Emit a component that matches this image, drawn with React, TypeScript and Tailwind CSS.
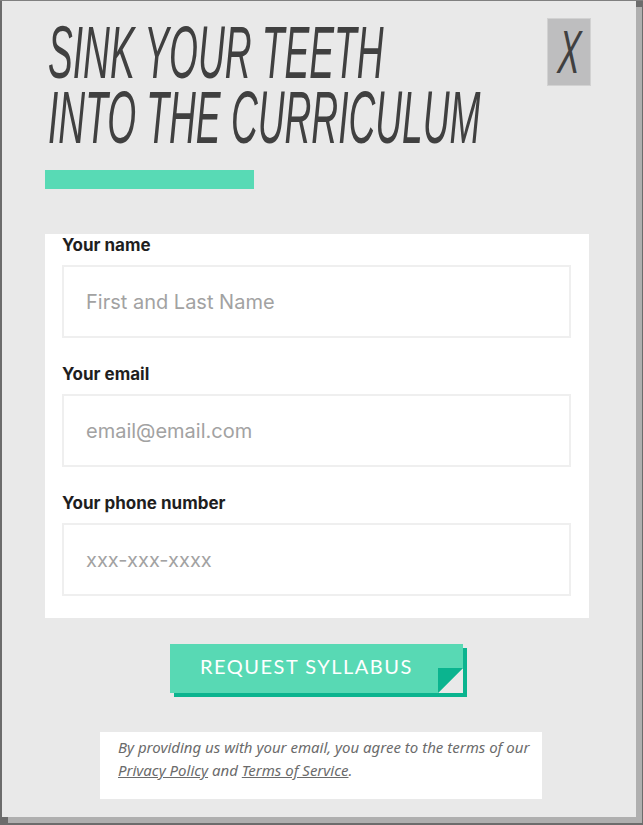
import React from 'react';

const fields = [
  { label: 'Your name', placeholder: 'First and Last Name', type: 'text' },
  { label: 'Your email', placeholder: 'email@email.com', type: 'email' },
  { label: 'Your phone number', placeholder: 'xxx-xxx-xxxx', type: 'tel' },
];

export default function App() {
  return (
    <div className="min-h-screen bg-[#6c6c6c] pt-px pl-[2px] border-t border-[#808080]">
      <div className="relative w-[634px] h-[816px] -mt-px bg-[#e9e9e9] shadow-[6px_6px_0_#afafaf]">
        {/* header */}
        <div className="flex justify-between pl-[46px] pr-[45px]">
          <div className="flex-1 min-w-0 overflow-hidden">
            <h1
              className="mt-[19px] text-[75px] leading-[65px] italic font-normal text-[#404040] uppercase origin-left scale-x-[0.495] whitespace-nowrap"
              style={{ fontFamily: '"Liberation Sans", Arial, sans-serif' }}
            >
              Sink your teeth
              <br />
              into the curriculum
            </h1>
          </div>
          <button className="mt-[17px] w-[44px] h-[68px] bg-[#bebebf] border border-[#d2d2d2] flex items-center justify-center shrink-0">
            <span
              className="block text-[61px] leading-none italic text-[#404040] scale-x-[0.55] -skew-x-[6deg]"
              style={{ fontFamily: '"Liberation Sans", Arial, sans-serif' }}
            >
              X
            </span>
          </button>
        </div>

        <div className="ml-[43px] mt-[20px] w-[209px] h-[19px] bg-[#58dab5]" />

        {/* form card */}
        <form
          className="ml-[43px] mt-[45px] w-[544px] bg-white pl-[17px] pr-[18px] pt-px pb-[22px]"
          style={{ fontFamily: 'Inter, "Noto Sans", sans-serif' }}
        >
          {fields.map((f, i) => (
            <div key={f.label} className={i === 0 ? '' : 'mt-[26px]'}>
              <label className="block h-[20px] mb-[10px] text-[17px] leading-[20px] font-bold text-[#1e1e1e]">
                {f.label}
              </label>
              <input
                type={f.type}
                placeholder={f.placeholder}
                className="block w-[509px] h-[73px] border-2 border-[#efefef] px-[22px] text-[20px] text-[#333] placeholder:text-[#a2a2a2] outline-none"
              />
            </div>
          ))}
        </form>

        {/* submit */}
        <div className="ml-[168px] mt-[26px] relative w-[293px] h-[49px]">
          <div className="absolute left-[4px] top-[4px] w-[293px] h-[49px] bg-[#0bb48f]" />
          <button
            className="absolute inset-0 bg-[#58d9b4] text-white text-[20px] tracking-[1.5px] text-left pl-[30px] pb-[6px]"
            style={{ fontFamily: 'Lato, "Noto Sans", sans-serif' }}
          >
            REQUEST SYLLABUS
          </button>
          <svg className="absolute right-0 bottom-0" width="25" height="25" viewBox="0 0 25 25">
            <polygon points="0,25 25,0 25,25" fill="#e9e9e9" />
            <polygon points="0,0 25,0 0,25" fill="#0bb48f" />
          </svg>
        </div>

        {/* disclaimer */}
        <div
          className="ml-[98px] mt-[39px] w-[442px] h-[67px] bg-white pl-[18px] pt-[4px] text-[15px] leading-[23px] italic text-[#6b6b6b] whitespace-nowrap"
          style={{ fontFamily: '"Noto Sans", sans-serif' }}
        >
          By providing us with your email, you agree to the terms of our
          <br />
          <a href="#" className="underline">Privacy Policy</a> and{' '}
          <a href="#" className="underline">Terms of Service</a>.
        </div>
      </div>
    </div>
  );
}
